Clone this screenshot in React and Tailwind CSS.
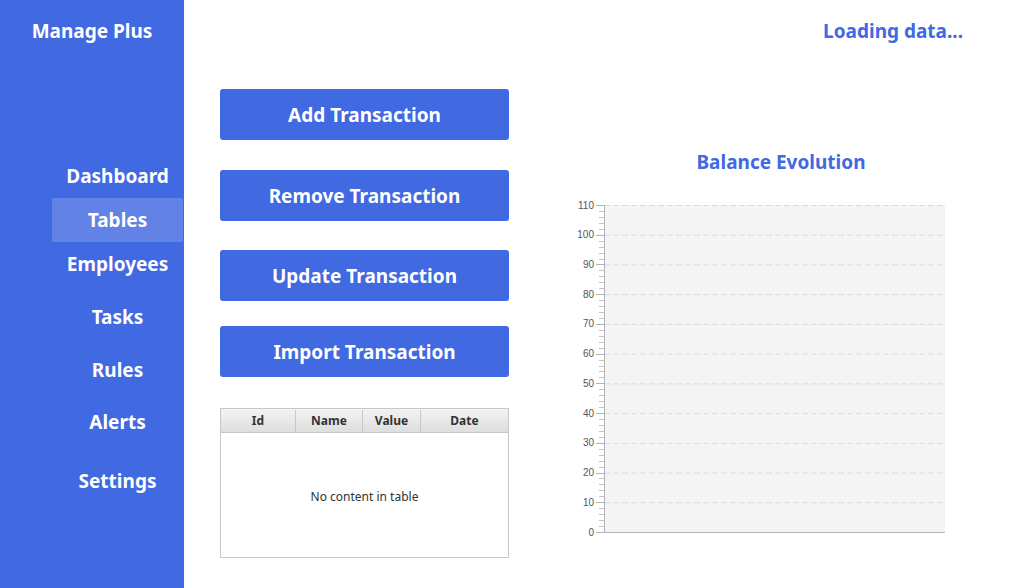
import React from "react";

const F = { fontFamily: '"Noto Sans", "Open Sans", sans-serif' };

function Chart() {
  const x0 = 34, x1 = 375, yT = 10, yB = 337;
  const step = (yB - yT) / 11;
  const majors = Array.from({ length: 12 }, (_, i) => i);
  const minors = [];
  for (let i = 0; i < 11; i++) for (let j = 1; j < 5; j++) minors.push(yB - i * step - (j * step) / 5);
  return (
    <svg width="380" height="350" className="block">
      <rect x={x0} y={yT} width={x1 - x0} height={yB - yT} fill="#f4f4f4" />
      {majors.slice(1).map((i) => (
        <line key={"g" + i} x1={x0} x2={x1} y1={yB - i * step + 0.5} y2={yB - i * step + 0.5} stroke="#dcdcdc" strokeDasharray="6 3" />
      ))}
      {minors.map((y, k) => (
        <line key={"m" + k} x1={x0 - 5} x2={x0} y1={Math.round(y) + 0.5} y2={Math.round(y) + 0.5} stroke="#c4c4c4" />
      ))}
      {majors.map((i) => (
        <g key={"t" + i}>
          <line x1={x0 - 8} x2={x0} y1={Math.round(yB - i * step) + 0.5} y2={Math.round(yB - i * step) + 0.5} stroke="#b4b4b4" />
          <text x={x0 - 10} y={yB - i * step + 3.5} textAnchor="end" fontSize="10" fill="#555" style={{ fontFamily: '"Liberation Sans", Arial, sans-serif' }}>
            {i * 10}
          </text>
        </g>
      ))}
      <line x1={x0 + 0.5} x2={x0 + 0.5} y1={yT} y2={yB} stroke="#b4b4b4" />
      <line x1={x0} x2={x1} y1={yB + 0.5} y2={yB + 0.5} stroke="#b4b4b4" />
    </svg>
  );
}

function Btn({ children, mt }) {
  return (
    <button className={`w-[289px] h-[51px] pt-[2px] rounded-[3px] bg-[#4169e1] text-white text-[19px] font-bold flex items-center justify-center ${mt}`} style={F}>
      {children}
    </button>
  );
}

export default function App() {
  const nav = [
    ["Dashboard", "mt-[92px]", false],
    ["Tables", "", true],
    ["Employees", "", false],
    ["Tasks", "mt-[9px]", false],
    ["Rules", "mt-[9px]", false],
    ["Alerts", "mt-[8px]", false],
    ["Settings", "mt-[15px]", false],
  ];
  return (
    <div className="flex w-[1017px] h-[588px] bg-white overflow-hidden" style={F}>
      <div className="w-[184px] shrink-0 bg-[#4169e1] flex flex-col">
        <div className="h-[62px] flex items-center justify-center text-white text-[19px] font-bold">
          Manage Plus
        </div>
        <div className="flex flex-col">
          {nav.map(([t, mt, act]) => (
            <div
              key={t}
              className={`ml-[52px] w-[131px] h-[44px] flex items-center justify-center text-white text-[19px] font-bold rounded-[2px] ${mt} ${act ? "bg-[#6282e6]" : ""}`}
            >
              {t}
            </div>
          ))}
        </div>
      </div>
      <div className="flex-1 flex flex-col">
        <div className="h-[62px] flex items-center justify-end pr-[54px] text-[#4169e1] text-[19px] font-bold">
          Loading data...
        </div>
        <div className="flex">
          <div className="ml-[36px] flex flex-col">
            <Btn mt="mt-[27px]">Add Transaction</Btn>
            <Btn mt="mt-[30px]">Remove Transaction</Btn>
            <Btn mt="mt-[29px]">Update Transaction</Btn>
            <Btn mt="mt-[25px]">Import Transaction</Btn>
            <div className="mt-[31px] w-[289px] h-[150px] border border-[#c8c8c8] flex flex-col">
              <div className="flex h-[24px] pt-[1px] border-b border-[#c8c8c8] bg-gradient-to-b from-[#f3f3f3] to-[#dedede] text-[12px] font-bold text-[#333]">
                <div className="w-[75px] border-r border-[#c8c8c8] flex items-center justify-center">Id</div>
                <div className="w-[67px] border-r border-[#c8c8c8] flex items-center justify-center">Name</div>
                <div className="w-[58px] border-r border-[#c8c8c8] flex items-center justify-center">Value</div>
                <div className="flex-1 flex items-center justify-center">Date</div>
              </div>
              <div className="flex-1 pt-[3px] flex items-center justify-center text-[12px] text-[#333]">No content in table</div>
            </div>
          </div>
          <div className="ml-[61px] flex flex-col">
            <div className="mt-[86px] w-[380px] h-[28px] flex items-center justify-center pl-[42px] text-[#4169e1] text-[19px] font-bold">
              Balance Evolution
            </div>
            <div className="mt-[19px]">
              <Chart />
            </div>
          </div>
        </div>
      </div>
    </div>
  );
}
